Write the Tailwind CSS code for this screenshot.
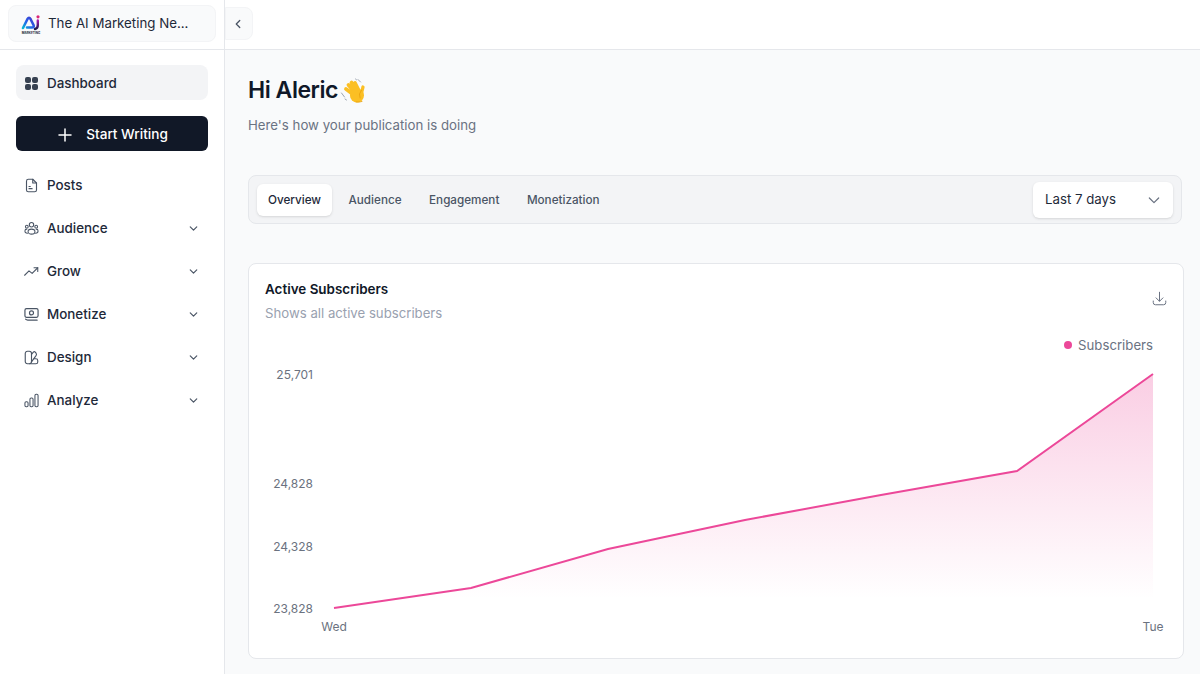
<!DOCTYPE html>
<html lang="en">
<head>
  <meta charset="UTF-8" />
  <meta name="viewport" content="width=device-width, initial-scale=1.0"/>
  <title>Dashboard</title>
  <script src="https://cdn.jsdelivr.net/npm/@tailwindcss/browser@4"></script>
</head>
<body class="font-['Inter',sans-serif] bg-white text-gray-900 h-[674px] w-[1200px] overflow-hidden">

  <div class="flex h-[50px] border-b border-gray-200">
    <div class="w-[224px] pl-2 pr-2 pt-[5px] shrink-0">
      <div class="h-[37px] w-[208px] flex items-center gap-[7px] pl-3 bg-[#f9fafb] border border-gray-100 rounded-lg">
        <svg class="w-[20px] h-[20px]" viewBox="0 0 20 20" fill="none">
          <defs>
            <linearGradient id="logo" x1="0" y1="1" x2="1" y2="0"><stop offset="0" stop-color="#06b6d4"/><stop offset="0.45" stop-color="#2563eb"/><stop offset="1" stop-color="#4338ca"/></linearGradient>
            <linearGradient id="logo-i" x1="0" y1="0" x2="0" y2="1"><stop offset="0" stop-color="#a21caf"/><stop offset="1" stop-color="#1e1b4b"/></linearGradient>
          </defs>
          <path d="M2 14 L6.500 5 Q8 2.500 9.500 5 L12.500 11 Q13.500 13.500 11 13.500 L6 13.500" stroke="url(#logo)" stroke-width="2.600" stroke-linecap="round" stroke-linejoin="round"/>
          <path d="M16.800 6.500 V11 Q16.800 14.500 14 15" stroke="url(#logo-i)" stroke-width="2.400" stroke-linecap="round"/>
          <circle cx="17" cy="2.800" r="1.600" fill="#db2777"/>
          <text x="10" y="19.500" text-anchor="middle" font-size="3" font-weight="700" fill="#1f2937">MARKETING</text>
        </svg>
        <span class="text-[13.300px] text-gray-800 whitespace-nowrap">The AI Marketing Ne...</span>
      </div>
    </div>
    <div class="flex-1 border-l border-gray-200 pt-[7px]">
      <button class="w-[28px] h-[33px] pr-[2px] flex items-center justify-center bg-[#f9fafb] border border-gray-100 rounded-r-lg">
        <svg class="w-[14px] h-[14px] text-gray-600" viewBox="0 0 24 24" fill="none" stroke="currentColor" stroke-width="2.200" stroke-linecap="round" stroke-linejoin="round"><path d="M15 6l-6 6 6 6"/></svg>
      </button>
    </div>
  </div>

  <div class="flex h-[624px]">
    <aside class="w-[224px] shrink-0 px-[16px] pt-[15px]">
      <a class="flex items-center gap-[9px] h-[35px] w-[192px] pl-[9px] pt-[2px] bg-gray-100 rounded-lg text-[13.400px] font-medium text-gray-800">
        <svg class="w-[13px] h-[13px]" viewBox="0 0 13 13" fill="#374151"><rect x="0" y="0" width="6" height="6" rx="2"/><rect x="7" y="0" width="6" height="6" rx="2"/><rect x="0" y="7" width="6" height="6" rx="2"/><rect x="7" y="7" width="6" height="6" rx="2"/></svg>
        Dashboard
      </a>
      <button class="mt-[16px] flex items-center justify-center gap-[14px] h-[35px] w-[192px] pl-[2px] pt-[2px] bg-[#111827] rounded-md text-[13.600px] font-medium text-white">
        <svg class="w-[14px] h-[14px]" viewBox="0 0 14 14" fill="none" stroke="currentColor" stroke-width="1.500" stroke-linecap="round"><path d="M7 1v12M1 7h12"/></svg>
        Start Writing
      </button>
      <nav class="mt-[17px] flex flex-col gap-[8px] text-[13.400px] font-medium text-gray-800">
        <a class="flex items-center gap-[8px] h-[35px] pl-[8px]">
          <svg class="w-[15px] h-[15px] text-gray-600" viewBox="0 0 24 24" fill="none" stroke="currentColor" stroke-width="1.800" stroke-linecap="round" stroke-linejoin="round"><path d="M14 2H7a3 3 0 0 0-3 3v14a3 3 0 0 0 3 3h10a3 3 0 0 0 3-3V8z"/><path d="M14 2v6h6"/><path d="M8 17h5M8 13.500h2"/></svg>
          Posts
        </a>
        <a class="flex items-center gap-[8px] h-[35px] pl-[8px] pr-[8px]">
          <svg class="w-[15px] h-[15px] text-gray-600" viewBox="0 0 24 24" fill="none" stroke="currentColor" stroke-width="1.700" stroke-linecap="round" stroke-linejoin="round"><circle cx="12" cy="6" r="3.500"/><circle cx="4.500" cy="9" r="2.200"/><circle cx="19.500" cy="9" r="2.200"/><ellipse cx="12" cy="17" rx="5.500" ry="4"/><path d="M5.500 19.500C3 19.500 1.500 18 1.500 16s1.500-3 3-3M18.500 19.500c2.500 0 4-1.500 4-3.500s-1.500-3-3-3"/></svg>
          Audience
          <svg class="ml-auto w-[13px] h-[13px] text-gray-600" viewBox="0 0 24 24" fill="none" stroke="currentColor" stroke-width="2.200" stroke-linecap="round" stroke-linejoin="round"><path d="M6 9l6 6 6-6"/></svg>
        </a>
        <a class="flex items-center gap-[8px] h-[35px] pl-[8px] pr-[8px]">
          <svg class="w-[15px] h-[15px] text-gray-600" viewBox="0 0 24 24" fill="none" stroke="currentColor" stroke-width="1.700" stroke-linecap="round" stroke-linejoin="round"><path d="M1 18l7-7 5 4 9-9"/><path d="M16 6h6v6"/></svg>
          Grow
          <svg class="ml-auto w-[13px] h-[13px] text-gray-600" viewBox="0 0 24 24" fill="none" stroke="currentColor" stroke-width="2.200" stroke-linecap="round" stroke-linejoin="round"><path d="M6 9l6 6 6-6"/></svg>
        </a>
        <a class="flex items-center gap-[8px] h-[35px] pl-[8px] pr-[8px]">
          <svg class="w-[15px] h-[15px] text-gray-600" viewBox="0 0 24 24" fill="none" stroke="currentColor" stroke-width="1.900" stroke-linecap="round" stroke-linejoin="round"><rect x="1.500" y="2.500" width="21" height="14" rx="2.500"/><circle cx="12" cy="9.500" r="3.200"/><path d="M2.500 19.500c1 1 2 1.500 3.500 1.500h15"/></svg>
          Monetize
          <svg class="ml-auto w-[13px] h-[13px] text-gray-600" viewBox="0 0 24 24" fill="none" stroke="currentColor" stroke-width="2.200" stroke-linecap="round" stroke-linejoin="round"><path d="M6 9l6 6 6-6"/></svg>
        </a>
        <a class="flex items-center gap-[8px] h-[35px] pl-[8px] pr-[8px]">
          <svg class="w-[15px] h-[15px] text-gray-600" viewBox="0 0 24 24" fill="none" stroke="currentColor" stroke-width="1.800" stroke-linecap="round" stroke-linejoin="round"><rect x="2" y="2" width="10" height="20" rx="3.500"/><path d="M12 7l3-3.500q1.500-1.500 3 0l1.500 2q1 1.500 0 3L12 19"/><path d="M9 22h10a3 3 0 0 0 3-3v-2a3 3 0 0 0-3-3h-2.500"/></svg>
          Design
          <svg class="ml-auto w-[13px] h-[13px] text-gray-600" viewBox="0 0 24 24" fill="none" stroke="currentColor" stroke-width="2.200" stroke-linecap="round" stroke-linejoin="round"><path d="M6 9l6 6 6-6"/></svg>
        </a>
        <a class="flex items-center gap-[8px] h-[35px] pl-[8px] pr-[8px]">
          <svg class="w-[15px] h-[15px] text-gray-600" viewBox="0 0 24 24" fill="none" stroke="currentColor" stroke-width="1.700" stroke-linecap="round" stroke-linejoin="round"><rect x="1.500" y="14" width="5" height="8" rx="2"/><rect x="9.500" y="8" width="5" height="14" rx="2"/><rect x="17.500" y="2" width="5" height="20" rx="2"/></svg>
          Analyze
          <svg class="ml-auto w-[13px] h-[13px] text-gray-600" viewBox="0 0 24 24" fill="none" stroke="currentColor" stroke-width="2.200" stroke-linecap="round" stroke-linejoin="round"><path d="M6 9l6 6 6-6"/></svg>
        </a>
      </nav>
    </aside>

    <main class="flex-1 bg-[#f9fafb] border-l border-gray-200 pl-[23px] pr-[16px] pt-[25px]">
      <h1 class="flex items-center gap-[2px] text-[23px] leading-[31px] tracking-[-0.45px] font-semibold text-gray-900">
        Hi Aleric
        <svg class="w-[26px] h-[26px]" viewBox="0 0 26 26" fill="none" stroke-linecap="round">
          <g stroke="#fbbf24" stroke-width="3.800">
            <path d="M6 11l8 6M8.500 7l7 8M11.500 4.500l6 9M15 5l4 8"/>
            <path d="M23 9l-2 8" stroke-width="3.200"/>
          </g>
          <circle cx="17" cy="17.500" r="7" fill="#fbbf24"/>
          <path d="M21.500 12q-3.500 4-1.500 8M22 23.500q-3 1-6 .5" stroke="#eaa30f" stroke-width="0.900"/>
          <path d="M18 1.500l2.500 2.500M15.500 1l1 .8M1.500 15l3 4M5 21l1.500 1" stroke="#9ca3af" stroke-width="1"/>
        </svg>
      </h1>
      <p class="mt-[9px] text-[13.250px] leading-[20px] text-gray-500">Here's how your publication is doing</p>

      <div class="mt-[40px] h-[49px] w-[934px] flex items-center justify-between pl-[8px] pr-[8px] bg-gray-100 border border-gray-200 rounded-lg">
        <div class="flex items-center gap-[5.500px] text-[11.700px] font-medium text-gray-600">
          <span class="h-[32px] px-[11px] pt-[2px] flex items-center bg-white rounded-md shadow-sm text-gray-800">Overview</span>
          <span class="h-[32px] px-[11px] pt-[2px] flex items-center">Audience</span>
          <span class="h-[32px] px-[11px] pt-[2px] flex items-center">Engagement</span>
          <span class="h-[32px] px-[11px] pt-[2px] flex items-center">Monetization</span>
        </div>
        <div class="w-[140px] h-[36px] flex items-center justify-between pl-[12px] pr-[11px] bg-white rounded-md shadow-sm text-[13.250px] text-gray-800">
          Last 7 days
          <svg class="w-[16px] h-[16px] text-gray-500" viewBox="0 0 24 24" fill="none" stroke="currentColor" stroke-width="1.800" stroke-linecap="round" stroke-linejoin="round"><path d="M5 9l7 7 7-7"/></svg>
        </div>
      </div>

      <section class="relative mt-[39px] h-[396px] w-[936px] bg-white border border-gray-200 rounded-lg">
        <div class="flex justify-between px-[16px] pt-[15px]">
          <div>
            <h2 class="text-[13.450px] leading-[20px] font-semibold text-gray-900">Active Subscribers</h2>
            <p class="mt-[4px] text-[13.200px] leading-[20px] text-gray-400">Shows all active subscribers</p>
          </div>
          <svg class="mt-[12px] w-[15px] h-[15px] text-gray-500" viewBox="0 0 24 24" fill="none" stroke="currentColor" stroke-width="1.600" stroke-linecap="round" stroke-linejoin="round"><path d="M12 2v14M6.500 11l5.500 5.500 5.500-5.500M2 16v2.500A3.500 3.500 0 0 0 5.500 22h13a3.500 3.500 0 0 0 3.500-3.500V16"/></svg>
        </div>
        <div class="absolute right-[30px] top-[71px] flex items-center gap-[6px] text-[13.200px] leading-[20px] text-gray-500">
          <span class="w-[8px] h-[8px] rounded-full bg-[#ec4899]"></span>Subscribers
        </div>
        <!-- chart coords are relative to the card's inner box -->
        <svg class="absolute left-0 top-0" width="934" height="394" viewBox="0 0 934 394" font-size="12" fill="#6b7280" style="font-family:Inter,sans-serif">
          <defs>
            <linearGradient id="area" gradientUnits="userSpaceOnUse" x1="0" y1="110" x2="0" y2="335">
              <stop offset="0" stop-color="#ec4899" stop-opacity="0.27"/>
              <stop offset="1" stop-color="#ec4899" stop-opacity="0"/>
            </linearGradient>
          </defs>
          <path d="M85 344 L222 324 L359 285 L496 256 L632 231 L768 207 L904 110 L904 344 Z" fill="url(#area)"/>
          <path d="M85 344 L222 324 L359 285 L496 256 L632 231 L768 207 L904 110" fill="none" stroke="#ec4899" stroke-width="2"/>
          <g text-anchor="end">
            <text x="64" y="115">25,701</text>
            <text x="64" y="224">24,828</text>
            <text x="64" y="287">24,328</text>
            <text x="64" y="349">23,828</text>
          </g>
          <text x="85" y="367" text-anchor="middle">Wed</text>
          <text x="904" y="367" text-anchor="middle">Tue</text>
        </svg>
      </section>
    </main>
  </div>
</body>
</html>
